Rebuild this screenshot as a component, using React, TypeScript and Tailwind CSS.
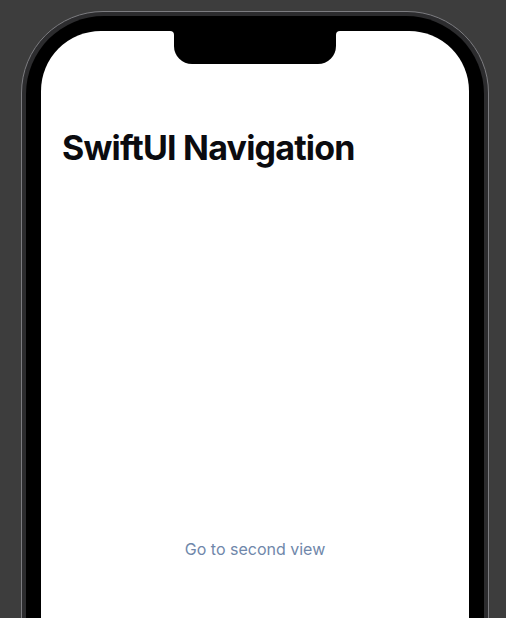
export default function App() {
  return (
    <div className="w-[506px] h-[618px] overflow-hidden bg-[#3d3d3d] pt-[11px] pl-[21px]">
      <div className="w-[468px] h-[640px] rounded-t-[82px] border border-[#7c7c80] bg-[#2c2c2e] px-[4px] pt-[4px]">
        <div className="h-full rounded-t-[78px] bg-black px-[15px] pt-[15px]">
          <div className="relative h-full rounded-t-[60px] bg-white">
            <Notch />
            <div className="flex h-[587px] flex-col px-[21px] pt-[95px] font-['Inter',sans-serif]">
              <h1 className="text-[34px] leading-[44px] font-bold tracking-[-0.8px] text-[#0b0b0f]">
                SwiftUI Navigation
              </h1>
              <div className="mt-auto mb-[58px] flex justify-center">
                <span className="text-[16px] leading-[22px] text-[#6f87aa]">Go to second view</span>
              </div>
            </div>
          </div>
        </div>
      </div>
    </div>
  );
}

function Notch() {
  return (
    <div className="absolute top-0 left-[129px] flex">
      <div className="relative h-[5px] w-[4px] bg-black">
        <div className="absolute inset-0 rounded-tr-[5px] bg-white" />
      </div>
      <div className="h-[33px] w-[162px] rounded-b-[18px] bg-black" />
      <div className="relative h-[5px] w-[4px] bg-black">
        <div className="absolute inset-0 rounded-tl-[5px] bg-white" />
      </div>
    </div>
  );
}
